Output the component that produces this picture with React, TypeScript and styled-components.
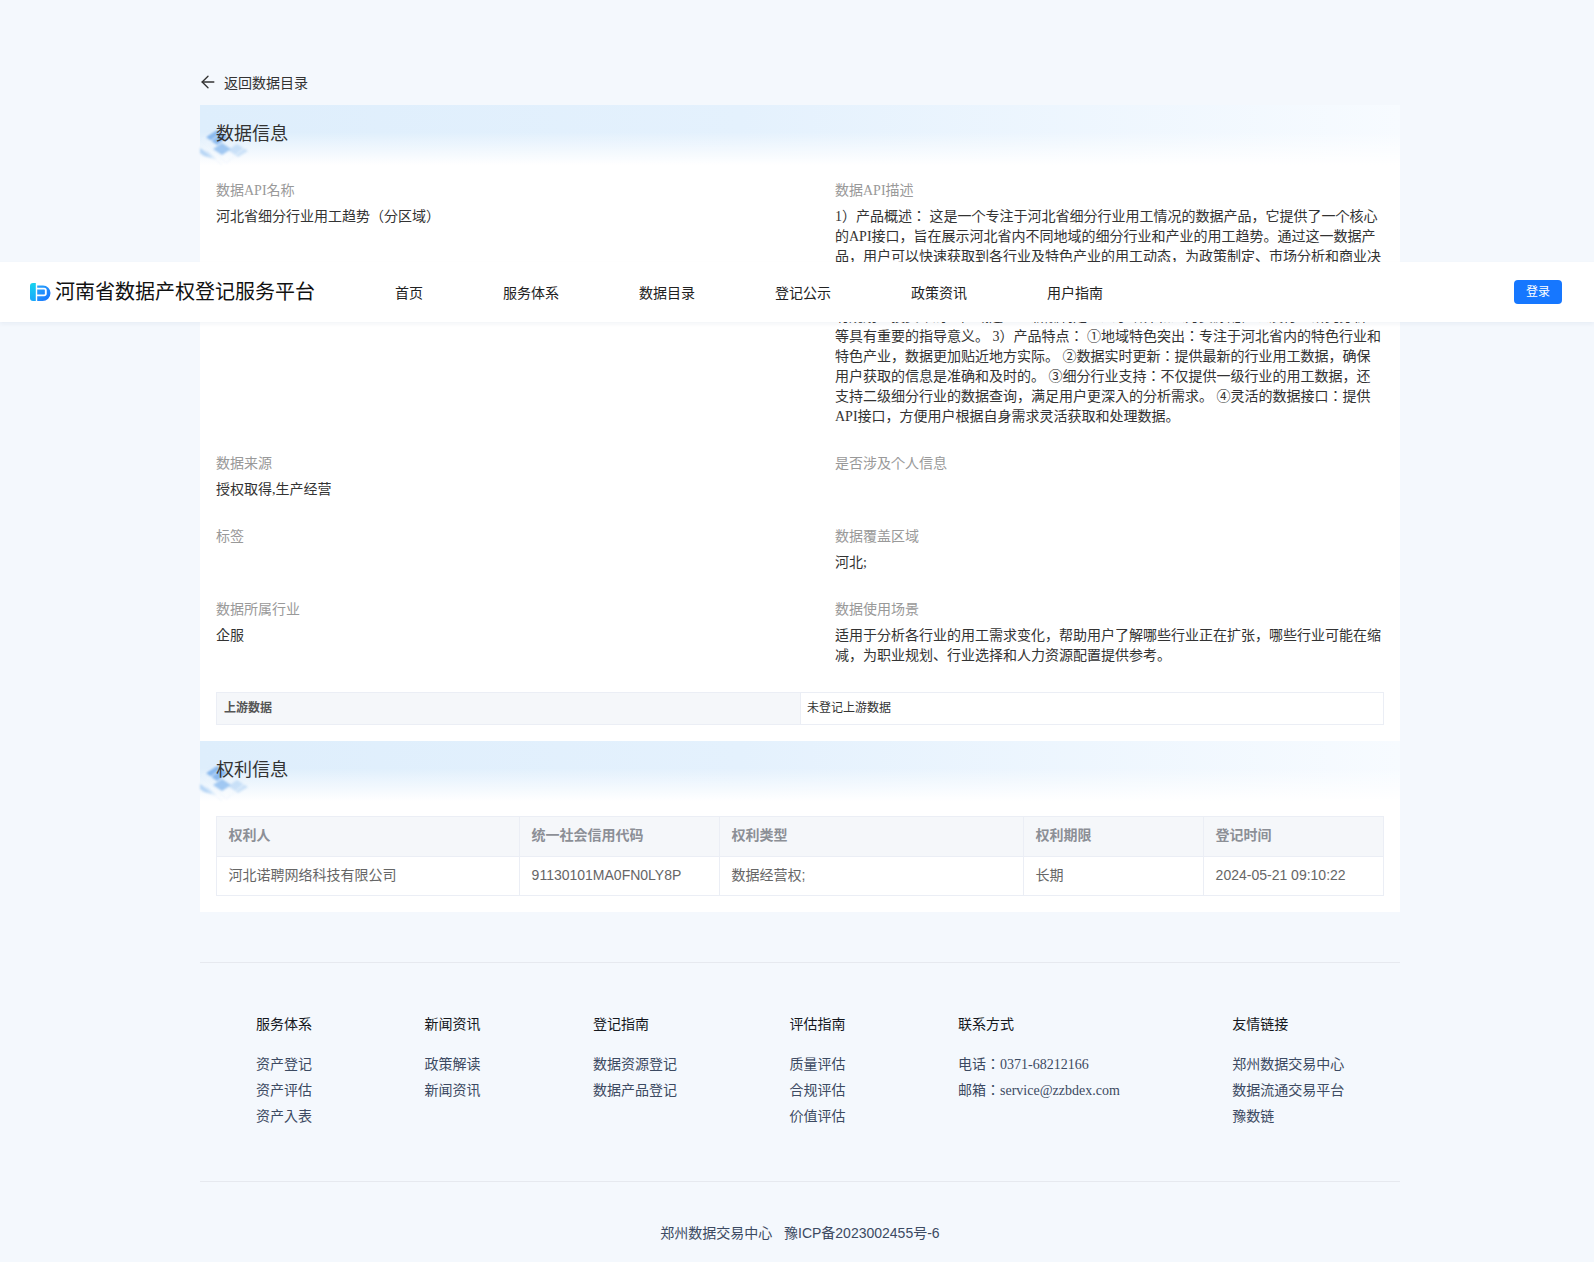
import React from 'react';
import styled, { createGlobalStyle } from 'styled-components';
import { ArrowLeft } from 'lucide-react';

const SERIF = '"Liberation Serif", "Noto Sans CJK JP", serif';
const SANS = '"Liberation Sans", "Noto Sans CJK JP", sans-serif';

const GlobalStyle = createGlobalStyle`
  html, body {
    margin: 0;
    padding: 0;
    background: #f4f8fd;
    font-family: ${SERIF};
    color: #333;
  }
  * { box-sizing: border-box; }
`;

const Page = styled.div`
  position: relative;
  width: 1594px;
  height: 1262px;
  overflow: hidden;
  padding: 72px 0 0 200px;
`;

const Header = styled.header`
  position: absolute;
  top: 262px;
  left: 0;
  right: 0;
  height: 60px;
  display: flex;
  align-items: center;
  padding: 0 32px 0 30px;
  background: #fff;
  box-shadow: 0 2px 4px rgba(30, 60, 120, 0.06);
  z-index: 10;
`;

const Brand = styled.div`
  display: flex;
  align-items: center;
  gap: 4px;
  width: 365px;
`;

const BrandName = styled.h3`
  margin: 0;
  font-size: 20px;
  line-height: 28px;
  font-weight: 400;
  color: #111;
  font-family: ${SANS};
`;

const Nav = styled.nav`
  display: flex;
  gap: 80px;
  flex: 1;
`;

const NavLink = styled.a`
  font-size: 14px;
  color: #222;
  font-family: ${SANS};
`;

const LoginButton = styled.button`
  width: 48px;
  height: 24px;
  padding: 0 0 1px;
  border: 0;
  border-radius: 4px;
  background: #1677ff;
  color: #fff;
  font-size: 12px;
  line-height: 20px;
  font-family: ${SANS};
`;

const BackLink = styled.a`
  display: flex;
  align-items: center;
  gap: 6px;
  height: 20px;
  margin: 0 0 13px -2px;
  font-size: 14px;
  color: #333;
  font-family: ${SANS};
`;

const Panel = styled.main`
  width: 1200px;
  height: 807px;
  background: #fff;
`;

const Band = styled.div`
  position: relative;
  height: 60px;
  padding-left: 16px;
  background:
    linear-gradient(to bottom, rgba(255, 255, 255, 0) 45%, #fff 100%),
    linear-gradient(to right, #deeefc, #e4f1fd 45%, #f7fbff 100%);
`;

const BandTitle = styled.h2`
  position: relative;
  margin: 0;
  font-size: 18px;
  line-height: 58px;
  font-weight: 400;
  color: #333;
  font-family: ${SANS};
`;

const BandArt = styled.svg`
  position: absolute;
  left: 0;
  top: 20px;
  filter: blur(1px);
`;

const Details = styled.div`
  display: grid;
  grid-template-columns: 619px 549px;
  row-gap: 27px;
  padding: 16px 16px 0;
`;

const Field = styled.div`
  min-height: 46px;
`;

const Label = styled.div`
  font-size: 14px;
  line-height: 20px;
  margin-bottom: 6px;
  color: #999;
`;

const Value = styled.div`
  font-size: 14px;
  line-height: 20px;
  color: #333;
  white-space: pre-line;
`;

const UpstreamTable = styled.div`
  display: grid;
  grid-template-columns: 584px 1fr;
  height: 33px;
  margin: 26px 16px 16px;
  border: 1px solid #ebeef5;
  font-size: 12px;
  line-height: 30px;
`;

const UpstreamHead = styled.div`
  padding-left: 7px;
  background: #f5f7fa;
  font-weight: 700;
  color: #555;
  border-right: 1px solid #ebeef5;
`;

const UpstreamCell = styled.div`
  padding-left: 6px;
  color: #333;
`;

const RightsWrap = styled.div`
  padding: 15px 16px 0;
`;

const RightsTable = styled.table`
  width: 1167px;
  border-collapse: collapse;
  table-layout: fixed;
  font-family: ${SANS};
  font-size: 14px;
  line-height: 20px;
`;

const Th = styled.th`
  height: 40px;
  padding: 0 11px 4px 11.6px;
  text-align: left;
  font-weight: 700;
  background: #f5f7fa;
  color: #8c8f96;
  border: 1px solid #ebeef5;
`;

const Td = styled.td`
  height: 39px;
  padding: 0 11px 3px 11.6px;
  color: #666;
  border: 1px solid #ebeef5;
`;

const Footer = styled.footer`
  width: 1200px;
  margin-top: 50px;
  border-top: 1px solid #e6e9ef;
`;

const FooterColumns = styled.div`
  display: flex;
  gap: 112.5px;
  height: 219px;
  padding: 49px 0 0 56px;
  border-bottom: 1px solid #e6e9ef;
`;

const FooterColumn = styled.div`
  display: flex;
  flex-direction: column;
  font-size: 14px;
  line-height: 26px;
`;

const FooterTitle = styled.div`
  margin-bottom: 14px;
  color: #15181e;
`;

const FooterItem = styled.a`
  color: #3c4a62;
  white-space: nowrap;
`;

const Copyright = styled.div`
  margin-top: 39px;
  text-align: center;
  font-size: 14px;
  line-height: 24px;
  color: #3c4a62;
  font-family: ${SANS};
  white-space: pre;
`;

const Logo = () => (
  <svg width="21" height="20" viewBox="0 0 21 20">
    <defs>
      <linearGradient id="logoLeft" x1="0" y1="0" x2="0" y2="1">
        <stop offset="0" stopColor="#17d3ee" />
        <stop offset="1" stopColor="#18a8fb" />
      </linearGradient>
      <linearGradient id="logoRight" x1="0" y1="0" x2="1" y2="1">
        <stop offset="0" stopColor="#2aa6fb" />
        <stop offset="1" stopColor="#1670ff" />
      </linearGradient>
    </defs>
    <path d="M3 1h2.8v18H3a3 3 0 0 1-3-3V4a3 3 0 0 1 3-3z" fill="url(#logoLeft)" />
    <path d="M7.2 3.5H13a7.5 7.5 0 0 1 7.5 7.5v0a8 8 0 0 1-8 8H7.2z" fill="url(#logoRight)" />
    <path d="M6 6.6h8.2a1.6 1.6 0 0 1 1.6 1.6v3.6a1.6 1.6 0 0 1-1.6 1.6H6" fill="none" stroke="#fff" strokeWidth="1.9" />
  </svg>
);

const Decoration = () => (
  <BandArt width="60" height="40" viewBox="0 0 60 40">
    <g fill="#7fb3ec">
      <path d="M6 12 L17 5 L28 12 L17 20 Z" opacity="0.9" />
      <path d="M13 24 L22 18 L31 24 L22 30 Z" opacity="0.7" />
    </g>
    <g fill="#a9cdf3">
      <path d="M28 25 L37 19 L48 26 L38 32 Z" opacity="0.55" />
      <path d="M0 23 L8 27 L16 34 L4 31 L0 28 Z" opacity="0.8" />
    </g>
    <g fill="none" stroke="#eef6fe" strokeWidth="1">
      <path d="M2 14 L22 0 L48 20 L26 38 Z" />
      <path d="M8 18 L28 3" />
      <path d="M0 22 L22 40" />
    </g>
  </BandArt>
);

const NAV_ITEMS = ['首页', '服务体系', '数据目录', '登记公示', '政策资讯', '用户指南'];

const DESCRIPTION =
  '1）产品概述： 这是一个专注于河北省细分行业用工情况的数据产品，它提供了一个核心的API接口，旨在展示河北省内不同地域的细分行业和产业的用工趋势。通过这一数据产品，用户可以快速获取到各行业及特色产业的用工动态，为政策制定、市场分析和商业决策提供有力的数据支持。 2）应用场景： ①政策制定：为政府部门制定产业政策提供数据依据。 ②市场分析：帮助企业了解行业用工趋势与市场变化。 ③商业决策：对企业的招聘规划、投资布局、区域选址、薪酬制定、人才培养和人力资源配置以及行业研究分析\n等具有重要的指导意义。 3）产品特点： ①地域特色突出：专注于河北省内的特色行业和特色产业，数据更加贴近地方实际。 ②数据实时更新：提供最新的行业用工数据，确保用户获取的信息是准确和及时的。 ③细分行业支持：不仅提供一级行业的用工数据，还支持二级细分行业的数据查询，满足用户更深入的分析需求。 ④灵活的数据接口：提供API接口，方便用户根据自身需求灵活获取和处理数据。';

const FIELDS: { label: string; value?: string }[] = [
  { label: '数据API名称', value: '河北省细分行业用工趋势（分区域）' },
  { label: '数据API描述', value: DESCRIPTION },
  { label: '数据来源', value: '授权取得,生产经营' },
  { label: '是否涉及个人信息' },
  { label: '标签' },
  { label: '数据覆盖区域', value: '河北;' },
  { label: '数据所属行业', value: '企服' },
  {
    label: '数据使用场景',
    value: '适用于分析各行业的用工需求变化，帮助用户了解哪些行业正在扩张，哪些行业可能在缩减，为职业规划、行业选择和人力资源配置提供参考。',
  },
];

const FOOTER_COLUMNS = [
  { title: '服务体系', items: ['资产登记', '资产评估', '资产入表'] },
  { title: '新闻资讯', items: ['政策解读', '新闻资讯'] },
  { title: '登记指南', items: ['数据资源登记', '数据产品登记'] },
  { title: '评估指南', items: ['质量评估', '合规评估', '价值评估'] },
  { title: '联系方式', items: ['电话：0371-68212166', '邮箱：service@zzbdex.com'] },
  { title: '友情链接', items: ['郑州数据交易中心', '数据流通交易平台', '豫数链'] },
];

const App = () => (
  <Page>
    <GlobalStyle />
    <Header>
      <Brand>
        <Logo />
        <BrandName>河南省数据产权登记服务平台</BrandName>
      </Brand>
      <Nav>
        {NAV_ITEMS.map((item) => (
          <NavLink key={item}>{item}</NavLink>
        ))}
      </Nav>
      <LoginButton>登录</LoginButton>
    </Header>

    <BackLink>
      <ArrowLeft size={20} strokeWidth={1.6} />
      返回数据目录
    </BackLink>

    <Panel>
      <Band>
        <Decoration />
        <BandTitle>数据信息</BandTitle>
      </Band>
      <Details>
        {FIELDS.map((field) => (
          <Field key={field.label}>
            <Label>{field.label}</Label>
            <Value>{field.value}</Value>
          </Field>
        ))}
      </Details>
      <UpstreamTable>
        <UpstreamHead>上游数据</UpstreamHead>
        <UpstreamCell>未登记上游数据</UpstreamCell>
      </UpstreamTable>

      <Band>
        <Decoration />
        <BandTitle>权利信息</BandTitle>
      </Band>
      <RightsWrap>
        <RightsTable>
          <colgroup>
            <col width="303" />
            <col width="200" />
            <col width="304" />
            <col width="180" />
            <col width="180" />
          </colgroup>
          <thead>
            <tr>
              <Th>权利人</Th>
              <Th>统一社会信用代码</Th>
              <Th>权利类型</Th>
              <Th>权利期限</Th>
              <Th>登记时间</Th>
            </tr>
          </thead>
          <tbody>
            <tr>
              <Td>河北诺聘网络科技有限公司</Td>
              <Td>91130101MA0FN0LY8P</Td>
              <Td>数据经营权;</Td>
              <Td>长期</Td>
              <Td>2024-05-21 09:10:22</Td>
            </tr>
          </tbody>
        </RightsTable>
      </RightsWrap>
    </Panel>

    <Footer>
      <FooterColumns>
        {FOOTER_COLUMNS.map((column) => (
          <FooterColumn key={column.title}>
            <FooterTitle>{column.title}</FooterTitle>
            {column.items.map((item) => (
              <FooterItem key={item}>{item}</FooterItem>
            ))}
          </FooterColumn>
        ))}
      </FooterColumns>
      <Copyright>郑州数据交易中心   豫ICP备2023002455号-6</Copyright>
    </Footer>
  </Page>
);

export default App;
